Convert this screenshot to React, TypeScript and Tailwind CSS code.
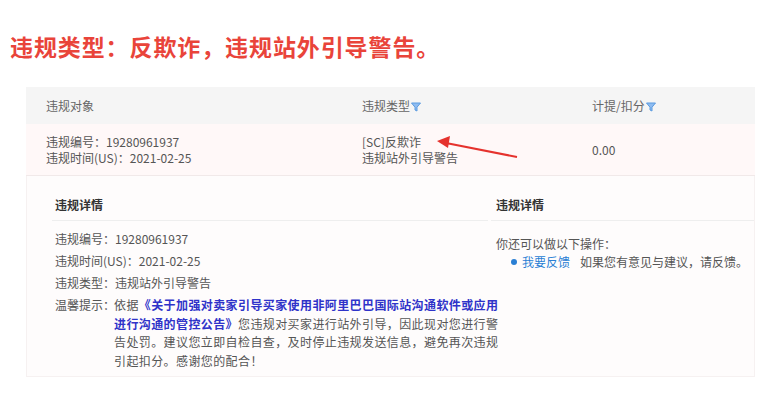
import React from "react";

const Funnel = () => (
  <svg width="10" height="10" viewBox="0 0 10 10" className="inline-block ml-[1px] align-[-1px]">
    <path d="M0.5 1 H9.5 L6 5.2 V9 L4 8 V5.2 Z" fill="#8fbcf0" stroke="#5b9be0" strokeWidth="1" strokeLinejoin="round" />
  </svg>
);

export default function App() {
  const font = { fontFamily: '"Noto Sans CJK SC", "Noto Sans", sans-serif' };
  return (
    <div className="relative w-[762px] h-[393px] bg-white overflow-hidden" style={font}>
      <div className="pt-[33px] pl-[10px] text-[23px] leading-[26px] font-bold text-[#e9443a] tracking-[0.9px]">
        违规类型：反欺诈，违规站外引导警告。
      </div>

      <div className="ml-[26px] mt-[28px] w-[729px]">
        <div className="grid grid-cols-[336px_230px_1fr] h-[37px] items-center bg-[#f5f5f5] text-[12px] text-[#666]">
          <div className="pl-[20px]">违规对象</div>
          <div>违规类型<Funnel /></div>
          <div>计提/扣分<Funnel /></div>
        </div>
        <div className="grid grid-cols-[336px_230px_1fr] h-[52px] items-center bg-[#fff8f8] border-b border-[#f1e9e9] text-[12px] text-[#555] leading-[16px]">
          <div className="pl-[20px]">
            <div>违规编号：19280961937</div>
            <div>违规时间(US)：2021-02-25</div>
          </div>
          <div>
            <div>[SC]反欺诈</div>
            <div>违规站外引导警告</div>
          </div>
          <div>0.00</div>
        </div>

        <div className="flex h-[201px] bg-[#fefcfc] border-x border-b border-[#f6f1f1] pt-[13px] text-[12px] text-[#555]">
          <div className="ml-[25px] w-[436px] shrink-0">
            <div className="h-[32px] flex items-center pl-[3px] border-b border-[#eeeeee] font-bold text-[#333]">违规详情</div>
            <div className="pl-[3px] mt-[7px]">
              <div className="h-[22px] leading-[22px]">违规编号：19280961937</div>
              <div className="h-[22px] leading-[22px]">违规时间(US)：2021-02-25</div>
              <div className="h-[22px] leading-[22px]">违规类型：违规站外引导警告</div>
              <div className="flex mt-[2px] leading-[18.5px]">
                <div className="w-[59px] shrink-0 whitespace-nowrap">温馨提示：</div>
                <div className="whitespace-nowrap tracking-[0.4px]">
                  <div>
                    依据<span className="font-bold text-[#2f33c9]">《关于加强对卖家引导买家使用非阿里巴巴国际站沟通软件或应用</span>
                  </div>
                  <div>
                    <span className="font-bold text-[#2f33c9]">进行沟通的管控公告》</span>您违规对买家进行站外引导，因此现对您进行警
                  </div>
                  <div>告处罚。建议您立即自检自查，及时停止违规发送信息，避免再次违规</div>
                  <div>引起扣分。感谢您的配合！</div>
                </div>
              </div>
            </div>
          </div>
          <div className="ml-[3px] flex-1 min-w-0">
            <div className="h-[32px] flex items-center pl-[5px] border-b border-[#eeeeee] font-bold text-[#333]">违规详情</div>
            <div className="pl-[5px] mt-[14px] leading-[18px] whitespace-nowrap">
              <div>你还可以做以下操作：</div>
              <div className="flex items-center pl-[15px]">
                <span className="w-[6px] h-[6px] shrink-0 rounded-full bg-[#2a7fd4] mr-[5px]"></span>
                <span className="shrink-0 text-[#2a7fd4] mr-[10px]">我要反馈</span>
                <span className="shrink-0">如果您有意见与建议，请反馈。</span>
              </div>
            </div>
          </div>
        </div>
      </div>

      <svg className="absolute left-0 top-0 pointer-events-none" width="762" height="393">
        <line x1="517" y1="157" x2="446" y2="143" stroke="#e5322d" strokeWidth="2" />
        <path d="M437 141 L450 136 L448 148 Z" fill="#e5322d" />
      </svg>
    </div>
  );
}
